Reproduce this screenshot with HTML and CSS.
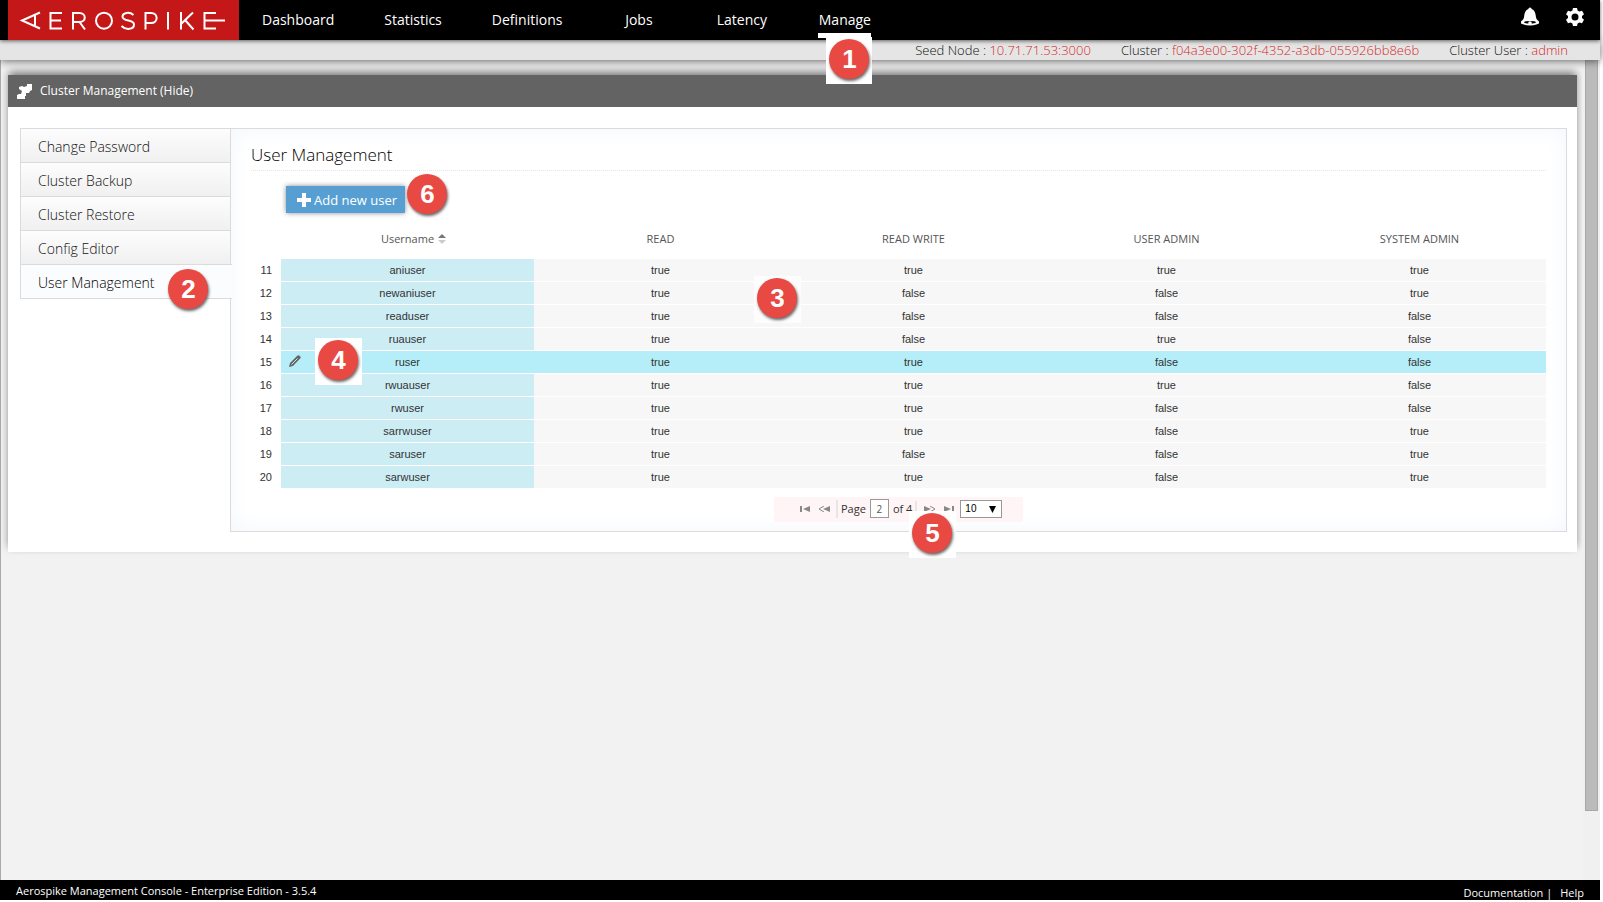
FILE: index.html
```html
<!DOCTYPE html>
<html lang="en">
<head>
<meta charset="utf-8">
<title>Aerospike Management Console</title>
<link rel="stylesheet" href="styles.css">
</head>
<body>
<div class="app">
  <header class="topbar">
    <a class="logo" href="#" aria-label="Aerospike">
      <svg viewBox="0 0 231 40" fill="none" stroke="#fff" stroke-width="2">
        <path d="M32 12.500L14 20.500L32 28.500M27 15V26"/>
        <path d="M54 13H42.500V28.500H54M42.500 20.500H53"/>
        <path d="M65 29.500V13H71.500C78.500 13 78.500 22 71.500 22H65M71.500 22L77 29.500"/>
        <circle cx="96" cy="20.700" r="8"/>
        <path d="M125.500 15C121 11 114.500 13 114.500 16.500C114.500 22 126 19 126 24.500C126 29.500 118 30.500 113.500 26"/>
        <path d="M137.500 29.500V13H143C150.500 13 150.500 23 143 23H137.500"/>
        <path d="M160 12V29.500M173 12V29.500M185 12.500L173 24M177 20L185.500 29.500"/>
        <path d="M208 13H196.500V28.500H208M196.500 20.500H217"/>
      </svg>
    </a>
    <nav class="nav">
      <a href="#">Dashboard</a>
      <a href="#">Statistics</a>
      <a href="#">Definitions</a>
      <a href="#">Jobs</a>
      <a href="#">Latency</a>
      <a href="#" class="current">Manage<span class="marker marker-1">1</span></a>
    </nav>
    <div class="tools">
      <button type="button" aria-label="Alerts">
        <svg width="20" height="20" viewBox="0 0 20 20"><path fill="#fff" d="M10 0.500C11 0.500 11.500 1.300 11.600 2C14.500 3 15.500 6 15.800 9C16 11.500 17 13 19 14.500V16.500H1V14.500C3 13 4 11.500 4.200 9C4.500 6 5.500 3 8.400 2C8.500 1.300 9 0.500 10 0.500Z"/><ellipse cx="10" cy="15.500" rx="9" ry="3" fill="#fff"/><ellipse cx="10" cy="15.300" rx="6" ry="1.400" fill="#000"/><circle cx="10" cy="16" r="1.800" fill="#fff"/></svg>
      </button>
      <button type="button" aria-label="Settings">
        <svg width="20" height="20" viewBox="0 0 20 20"><path fill="#fff" fill-rule="evenodd" d="M8 1H12L12.600 3.600L14.400 4.600L17 3.800L19 7.200L17 9V11L19 12.800L17 16.200L14.400 15.400L12.600 16.400L12 19H8L7.400 16.400L5.600 15.400L3 16.200L1 12.800L3 11V9L1 7.200L3 3.800L5.600 4.600L7.400 3.600ZM10 6.500A3.500 3.500 0 1 0 10 13.500A3.500 3.500 0 1 0 10 6.500Z"/></svg>
      </button>
    </div>
  </header>

  <div class="status">
    <span>Seed Node : <b>10.71.71.53:3000</b></span>
    <span>Cluster : <b>f04a3e00-302f-4352-a3db-055926bb8e6b</b></span>
    <span>Cluster User : <b>admin</b></span>
  </div>

  <div class="body">
    <main class="content">
      <section class="card">
        <h1 class="card-head">
          <svg width="15" height="15" viewBox="0 0 15 15"><path fill="#fff" d="M10 0H15V6L13 7L12 9H9V12H8V15H0V11L2 10H4L5 7L2 5V3L5 2L7 3L10 2Z"/></svg>
          Cluster Management (Hide)
        </h1>
        <div class="card-body">
          <nav class="side">
            <a href="#">Change Password</a>
            <a href="#">Cluster Backup</a>
            <a href="#">Cluster Restore</a>
            <a href="#">Config Editor</a>
            <a href="#" class="selected">User Management<span class="marker marker-2">2</span></a>
          </nav>
          <div class="panel">
            <h2>User Management</h2>
            <div class="actions">
              <button type="button" class="add"><svg width="14" height="14" viewBox="0 0 14 14"><path d="M7 0V14M0 7H14" stroke="#fff" stroke-width="4"/></svg>Add new user</button>
              <span class="marker marker-6">6</span>
            </div>
            <div class="grid">
              <table>
                <thead>
                  <tr><th class="num"></th><th><span class="sort">Username<svg width="8" height="10" viewBox="0 0 8 10"><path fill="#777" d="M4 0L8 4H0Z"/><path fill="#ccc" d="M4 10L8 6H0Z"/></svg></span></th><th>READ</th><th>READ WRITE</th><th>USER ADMIN</th><th>SYSTEM ADMIN</th></tr>
                </thead>
                <tbody>
                  <tr><td class="num">11</td><td>aniuser</td><td>true</td><td>true</td><td>true</td><td>true</td></tr>
                  <tr><td class="num">12</td><td>newaniuser</td><td>true</td><td>false</td><td>false</td><td>true</td></tr>
                  <tr><td class="num">13</td><td>readuser</td><td>true</td><td>false</td><td>false</td><td>false</td></tr>
                  <tr><td class="num">14</td><td>ruauser</td><td>true</td><td>false</td><td>true</td><td>false</td></tr>
                  <tr class="active"><td class="num">15</td><td><button type="button" class="edit" aria-label="Edit ruser"><svg width="12" height="12" viewBox="0 0 12 12"><path fill="#666" d="M0 12L1 8L8.500 0.500Q9.500 -0.200 10.500 0.800L11.300 1.600Q12 2.500 11.400 3.300L4 11Z"/><path fill="none" stroke="#b5eef9" d="M2.500 9.500L8.500 3.500"/></svg></button>ruser<span class="marker marker-4">4</span></td><td>true</td><td>true</td><td>false</td><td>false</td></tr>
                  <tr><td class="num">16</td><td>rwuauser</td><td>true</td><td>true</td><td>true</td><td>false</td></tr>
                  <tr><td class="num">17</td><td>rwuser</td><td>true</td><td>true</td><td>false</td><td>false</td></tr>
                  <tr><td class="num">18</td><td>sarrwuser</td><td>true</td><td>true</td><td>false</td><td>true</td></tr>
                  <tr><td class="num">19</td><td>saruser</td><td>true</td><td>false</td><td>false</td><td>true</td></tr>
                  <tr><td class="num">20</td><td>sarwuser</td><td>true</td><td>true</td><td>false</td><td>true</td></tr>
                </tbody>
              </table>
              <span class="marker marker-3">3</span>
            </div>
            <div class="pager">
              <button type="button" aria-label="First page"><svg width="10" height="6" viewBox="0 0 10 6"><path fill="#888" d="M0 0H2V6H0ZM10 0V6L3 3Z"/></svg></button>
              <button type="button" aria-label="Previous page"><svg width="12" height="6" viewBox="0 0 12 6"><path fill="#888" d="M12 0V6L5 3Z"/><path fill="none" stroke="#888" d="M6 0L1 3L6 6"/></svg></button>
              <label class="page">Page <input type="text" value="2"></label>
              <span class="total">of 4</span>
              <button type="button" aria-label="Next page"><svg width="12" height="6" viewBox="0 0 12 6"><path fill="#888" d="M0 0V6L7 3Z"/><path fill="none" stroke="#888" d="M6 0L11 3L6 6"/></svg></button>
              <button type="button" aria-label="Last page"><svg width="10" height="6" viewBox="0 0 10 6"><path fill="#888" d="M0 0V6L7 3ZM8 0H10V6H8Z"/></svg></button>
              <span class="size"><select aria-label="Rows per page"><option>10</option></select><svg width="7" height="7" viewBox="0 0 7 7"><path d="M0 0H7L3.500 7Z"/></svg></span>
              <span class="marker marker-5">5</span>
            </div>
          </div>
        </div>
      </section>
    </main>
    <div class="scroll"><div class="thumb"></div></div>
  </div>

  <footer class="footer">
    <span>Aerospike Management Console - Enterprise Edition - 3.5.4</span>
    <span class="links"><a href="#">Documentation</a> |<a href="#">Help</a></span>
  </footer>
</div>
</body>
</html>
```
FILE: styles.css
```css
* { box-sizing: border-box; }
body { margin: 0; background: #fff; font-family: "Open Sans", "Noto Sans", sans-serif; color: #333; }
a { color: inherit; text-decoration: none; }
button { border: 0; padding: 0; background: none; font: inherit; color: inherit; }
svg { display: block; }
.app { display: flex; flex-direction: column; min-height: 100vh; padding: 0 3px 2px 0; }

.topbar { display: flex; height: 40px; padding-left: 8px; background: #000; color: #fff; position: relative; z-index: 2; box-shadow: 0 1px 4px rgba(0,0,0,.6); }
.logo { width: 231px; background: #c41718; }
.nav { display: flex; gap: 50px; padding-left: 23px; font-size: 14px; line-height: 40px; }
.nav > a { min-width: 53px; text-align: center; }
.current { position: relative; }
.current::after { content: ""; position: absolute; left: 0; right: 0; top: 33px; height: 5px; background: #fff; }
.tools { display: flex; gap: 25px; margin-left: auto; padding: 7px 15px 0 0; align-items: flex-start; }

.status { display: flex; justify-content: flex-end; gap: 30px; height: 20px; padding-right: 32px; background: #e5e5e5; color: #111; font-size: 13px; font-weight: 300; line-height: 20px; position: relative; z-index: 1; box-shadow: 0 1px 8px rgba(0,0,0,.6); }
.status b { font-weight: inherit; color: #d4282a; }

.body { display: flex; flex: 1; background: #f2f2f2; border-left: 1px solid #aaa; }
.content { flex: 1; padding: 15px 5px 15px 7px; min-width: 0; }
.card { background: #fff; box-shadow: 0 -4px 8px -1px rgba(0,0,0,.5); }
.card-head { display: flex; align-items: center; gap: 8px; height: 32px; margin: 0; padding-left: 9px; background: #636363; color: #fff; font-size: 12px; line-height: 30px; font-weight: 400; }
.card-body { display: flex; padding: 21px 10px 20px 12px; }
.side { width: 210px; flex: none; position: relative; z-index: 1; }
.side a { display: block; height: 34px; padding-left: 17px; border: 1px solid #dadbdc; border-width: 1px 0 0 1px; background: linear-gradient(#fdfdfd, #f0f0f0); color: #111; font-size: 14px; font-weight: 300; line-height: 35px; }
.side .selected { height: 35px; width: 212px; border-bottom-width: 1px; background: #fbfcfe; color: #000; position: relative; }
.panel { flex: 1; min-width: 0; padding: 15px 20px 9px; border: 1px solid #dadbdc; box-shadow: inset 0 0 22px #f3f6fb; }
h2 { margin: 0; height: 27px; border-bottom: 1px dotted #e5e5e5; font-size: 17px; line-height: 22px; font-weight: 300; color: #000; }
.actions { position: relative; padding: 15px 0 0 35px; height: 53px; }
.add { display: flex; align-items: center; gap: 3px; height: 27px; padding: 0 8px 0 11px; background: #579fd3; color: #fff; font-size: 13px; box-shadow: 0 0 5px rgba(0,0,0,.45); }

.grid { position: relative; }
table { width: 100%; table-layout: fixed; border-collapse: separate; border-spacing: 0; font: 11px "Liberation Sans", Arial, sans-serif; text-align: center; }
th { height: 35px; padding: 0 0 6px; font: 11px "Open Sans", sans-serif; color: #555; }
td { height: 23px; padding: 0; background: #f7f7f7; border-bottom: 1px solid #fff; position: relative; }
td:nth-child(2) { background: #cdedf5; }
.active td, .active td:nth-child(2) { background: #b5eef9; }
td.num, .active td.num { background: none; text-align: right; padding-right: 9px; }
.num { width: 30px; }
.sort { position: relative; }
.sort svg { position: absolute; left: 100%; top: 3px; margin-left: 4px; }
.edit { position: absolute; left: 8px; top: 4px; }

.pager { position: relative; display: flex; align-items: center; width: 249px; height: 25px; margin: 8px 0 0 523px; padding: 0 0 2px 26px; background: #fff5f6; font-size: 11px; }
.pager button + button { margin-left: 8px; }
.page { display: flex; align-items: center; gap: 4px; margin-left: 6px; padding-left: 3px; border-left: 2px solid #e6e6e6; height: 18px; }
.page input { width: 19px; height: 19px; padding: 0; border: 1px solid #999; font: 10px "Open Sans", sans-serif; text-align: center; color: #555; }
.total { margin: 0 7px 0 4px; padding-right: 3px; border-right: 2px solid #e6e6e6; }
.size { position: relative; margin-left: 6px; }
.size svg { position: absolute; right: 6px; top: 6px; pointer-events: none; }
select { display: block; appearance: none; width: 42px; height: 18px; padding: 0 4px; border: 1px solid #999; border-radius: 0; background: #fff; font: 10px "Liberation Sans", sans-serif; }

.marker { position: absolute; z-index: 3; width: 47px; height: 47px; background: #fff; color: #fff; font: bold 26px/40px "Liberation Sans", sans-serif; display: flex; justify-content: center; align-items: flex-start; padding-top: 2px; isolation: isolate; }
.marker::before { content: ""; position: absolute; z-index: -1; left: 3px; top: 2px; width: 40px; height: 40px; border-radius: 50%; background: #e84943; box-shadow: 1px 2px 3px rgba(0,0,0,.6); }
.marker-1 { left: 8px; top: 37px; width: 46px; }
.marker-2 { left: 144px; top: 2px; background: none; }
.marker-3 { left: 503px; top: 52px; background: #fdfdfd; }
.marker-4 { left: 34px; top: -13px; }
.marker-5 { left: 135px; top: 14px; }
.marker-6 { left: 153px; top: 1px; background: none; }

.scroll { width: 18px; background: #f0f0f0; padding: 0 2px 0 3px; }
.thumb { height: 751px; background: #bbb; border: 1px solid #a8a8a8; border-top: 0; }
.footer { display: flex; justify-content: space-between; height: 20px; padding: 0 16px; background: #000; color: #fff; font-size: 11px; line-height: 22px; }
.links { line-height: 25px; }
.links a:last-child { margin-left: 8px; }
```
